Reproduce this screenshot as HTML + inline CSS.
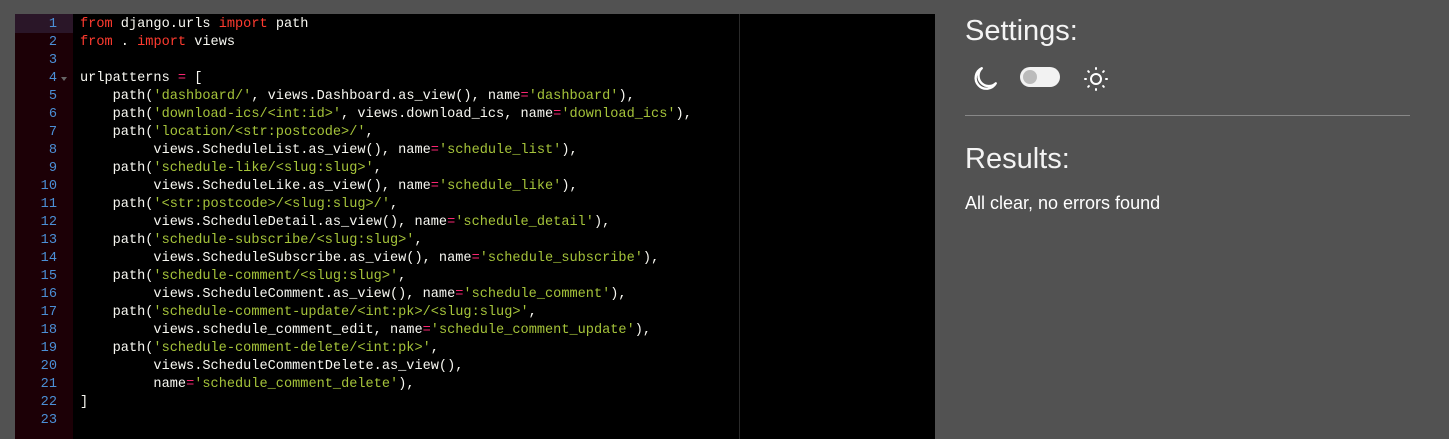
<!DOCTYPE html>
<html><head><style>
body{margin:0;width:1449px;height:439px;background:#525252;overflow:hidden;position:relative;font-family:"Liberation Sans",sans-serif}
#ed{position:absolute;left:15px;top:14px;width:920px;height:425px;background:#000}
#gut{position:absolute;left:0;top:0;width:58px;height:425px;background:#1c0006}
#pm{position:absolute;left:724px;top:0;width:1px;height:425px;background:#2a2a2a}
#lines{position:absolute;left:0;top:2px}
.ln{position:absolute;left:0;width:42px;text-align:right;color:#4b8fd6;font:13.6px/18px "Liberation Mono",monospace}
.cl{position:absolute;left:65px;white-space:pre;color:#f8f8f2;font:13.6px/18px "Liberation Mono",monospace}
.k{color:#ff3b2f}.s{color:#a5c33a}.o{color:#f92672}
#act{position:absolute;left:0;top:0;width:58px;height:19px;background:#2a1628}
.r{position:absolute;color:#fff}
</style></head><body>
<div id="ed">
<div id="gut"><div id="act"></div></div>
<div id="pm"></div>
<div id="lines"></div>
</div>
<div class="r" style="left:965px;top:15px;font-size:29px;font-weight:300;color:#f4f4f4">Settings:</div>
<svg style="position:absolute;left:971px;top:65px" width="28" height="28" viewBox="0 0 26 26"><path d="M10 3 A10 10 0 1 0 23 17 A9 9 0 0 1 10 3 Z" fill="none" stroke="#fff" stroke-width="2.2" stroke-linejoin="round"/></svg>
<div style="position:absolute;left:1020px;top:67px;width:40px;height:20px;border-radius:10px;background:#f2f2f2"></div>
<div style="position:absolute;left:1023px;top:70px;width:14px;height:14px;border-radius:7px;background:#bbb"></div>
<svg style="position:absolute;left:1083px;top:66px" width="26" height="26" viewBox="0 0 26 26" stroke="#fff" stroke-width="2" stroke-linecap="round" fill="none"><circle cx="13" cy="13" r="5"/><path d="M13 2v1M13 23v1M2 13h1M23 13h1M5.2 5.2l.7.7M20.1 20.1l.7.7M5.2 20.8l.7-.7M20.1 5.9l.7-.7"/></svg>
<div style="position:absolute;left:965px;top:115px;width:445px;height:1px;background:#888"></div>
<div class="r" style="left:965px;top:143px;font-size:29px;font-weight:300;color:#f4f4f4">Results:</div>
<div class="r" style="left:965px;top:193px;font-size:18px">All clear, no errors found</div>
<script>
const L=[
'<span class="k">from</span> django.urls <span class="k">import</span> path',
'<span class="k">from</span> . <span class="k">import</span> views',
'',
'urlpatterns <span class="o">=</span> [',
"    path(<span class=s>'dashboard/'</span>, views.Dashboard.as_view(), name<span class=o>=</span><span class=s>'dashboard'</span>),",
"    path(<span class=s>'download-ics/&lt;int:id&gt;'</span>, views.download_ics, name<span class=o>=</span><span class=s>'download_ics'</span>),",
"    path(<span class=s>'location/&lt;str:postcode&gt;/'</span>,",
"         views.ScheduleList.as_view(), name<span class=o>=</span><span class=s>'schedule_list'</span>),",
"    path(<span class=s>'schedule-like/&lt;slug:slug&gt;'</span>,",
"         views.ScheduleLike.as_view(), name<span class=o>=</span><span class=s>'schedule_like'</span>),",
"    path(<span class=s>'&lt;str:postcode&gt;/&lt;slug:slug&gt;/'</span>,",
"         views.ScheduleDetail.as_view(), name<span class=o>=</span><span class=s>'schedule_detail'</span>),",
"    path(<span class=s>'schedule-subscribe/&lt;slug:slug&gt;'</span>,",
"         views.ScheduleSubscribe.as_view(), name<span class=o>=</span><span class=s>'schedule_subscribe'</span>),",
"    path(<span class=s>'schedule-comment/&lt;slug:slug&gt;'</span>,",
"         views.ScheduleComment.as_view(), name<span class=o>=</span><span class=s>'schedule_comment'</span>),",
"    path(<span class=s>'schedule-comment-update/&lt;int:pk&gt;/&lt;slug:slug&gt;'</span>,",
"         views.schedule_comment_edit, name<span class=o>=</span><span class=s>'schedule_comment_update'</span>),",
"    path(<span class=s>'schedule-comment-delete/&lt;int:pk&gt;'</span>,",
"         views.ScheduleCommentDelete.as_view(),",
"         name<span class=o>=</span><span class=s>'schedule_comment_delete'</span>),",
']',
''];
let h='';L.forEach((t,i)=>{const y=i*18;h+=`<div class="ln" style="top:${y}px">${i+1}</div><div class="cl" style="top:${y}px">${t}</div>`});
h+='<div style="position:absolute;left:46px;top:61px;width:0;height:0;border-left:3px solid transparent;border-right:3px solid transparent;border-top:4px solid #666"></div>';
document.getElementById('lines').innerHTML=h;
</script>
</body></html>
